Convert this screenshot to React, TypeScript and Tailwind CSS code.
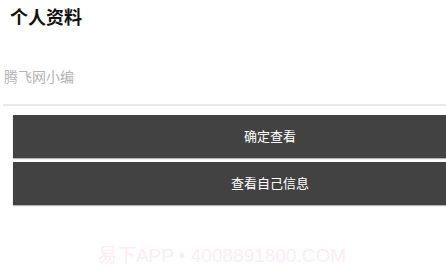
export default function App() {
  return (
    <div
      className="relative w-[446px] h-[278px] overflow-hidden bg-white"
      style={{ fontFamily: '"Liberation Sans", "Noto Sans CJK SC", sans-serif' }}
    >
      {/* Header */}
      <div className="pl-[10px] pt-[6px] h-[32px]">
        <h1 className="text-[18px] leading-[24px] font-bold text-[#111]">个人资料</h1>
      </div>

      {/* Name */}
      <div className="pl-[4px] pt-[36px] h-[72px]">
        <p className="text-[14px] leading-[18px] text-[#b3b3b3]">腾飞网小编</p>
      </div>
      <div className="ml-[3px] h-[2px] bg-[#e9e9e9]" />

      {/* Actions */}
      <div className="mt-[9px] ml-[13px] w-[514px] flex flex-col gap-[4px]">
        <button className="h-[43px] w-full bg-[#424242] text-white text-[13px] shadow-[0_1px_1px_#b5b5b5] flex items-center justify-center">
          确定查看
        </button>
        <button className="h-[43px] w-full bg-[#424242] text-white text-[13px] shadow-[0_1px_1px_#b5b5b5] flex items-center justify-center">
          查看自己信息
        </button>
      </div>

      {/* Watermark */}
      <div className="absolute left-0 right-0 top-[243px] flex justify-center">
        <span className="ml-[-2px] text-[19px] leading-[26px] text-[#fcebf8]">
          易下APP • 4008891800.COM
        </span>
      </div>
    </div>
  );
}
